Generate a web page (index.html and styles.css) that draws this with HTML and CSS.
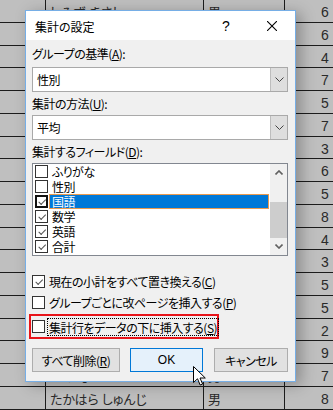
FILE: index.html
```html
<!DOCTYPE html>
<html lang="ja">
<head>
  <meta charset="UTF-8" />
  <title>集計の設定</title>
  <link rel="stylesheet" href="styles.css">
</head>
<body>
  <div class="sheet">
    <div class="cell"></div><div class="cell name">しみず まさし</div><div class="cell">男</div><div class="cell num">6</div>
    <div class="cell"></div><div class="cell name"></div><div class="cell"></div><div class="cell num">6</div>
    <div class="cell"></div><div class="cell name"></div><div class="cell"></div><div class="cell num">4</div>
    <div class="cell"></div><div class="cell name"></div><div class="cell"></div><div class="cell num">7</div>
    <div class="cell"></div><div class="cell name"></div><div class="cell"></div><div class="cell num">5</div>
    <div class="cell"></div><div class="cell name"></div><div class="cell"></div><div class="cell num">7</div>
    <div class="cell"></div><div class="cell name"></div><div class="cell"></div><div class="cell num">3</div>
    <div class="cell"></div><div class="cell name"></div><div class="cell"></div><div class="cell num">6</div>
    <div class="cell"></div><div class="cell name"></div><div class="cell"></div><div class="cell num">5</div>
    <div class="cell"></div><div class="cell name"></div><div class="cell"></div><div class="cell num">8</div>
    <div class="cell"></div><div class="cell name"></div><div class="cell"></div><div class="cell num">4</div>
    <div class="cell"></div><div class="cell name"></div><div class="cell"></div><div class="cell num">3</div>
    <div class="cell"></div><div class="cell name"></div><div class="cell"></div><div class="cell num">5</div>
    <div class="cell"></div><div class="cell name"></div><div class="cell"></div><div class="cell num">5</div>
    <div class="cell"></div><div class="cell name"></div><div class="cell"></div><div class="cell num">2</div>
    <div class="cell"></div><div class="cell name"></div><div class="cell"></div><div class="cell num">9</div>
    <div class="cell"></div><div class="cell name">おの なおき</div><div class="cell">男</div><div class="cell num">7</div>
    <div class="cell"></div><div class="cell name">たかはら しゅんじ</div><div class="cell">男</div><div class="cell num">8</div>
  </div>

  <div class="dialog">
    <div class="titlebar">
      <span class="title">集計の設定</span>
      <span class="tb-btn help">?</span>
      <span class="tb-btn close">
        <svg width="10" height="10" viewBox="0 0 10 10"><path d="M0 0L10 10M10 0L0 10" stroke="#000" stroke-width="1.1" fill="none"/></svg>
      </span>
    </div>

    <div class="dlg-body">
      <div class="label">グループの基準(<u>A</u>):</div>
      <div class="combo">
        <span class="combo-text">性別</span>
        <span class="combo-btn"><svg width="9" height="5" viewBox="0 0 9 5"><path d="M0.5 0.5L4.5 4.5L8.5 0.5" stroke="#444" fill="none"/></svg></span>
      </div>

      <div class="label">集計の方法(<u>U</u>):</div>
      <div class="combo">
        <span class="combo-text">平均</span>
        <span class="combo-btn"><svg width="9" height="5" viewBox="0 0 9 5"><path d="M0.5 0.5L4.5 4.5L8.5 0.5" stroke="#444" fill="none"/></svg></span>
      </div>

      <div class="label">集計するフィールド(<u>D</u>):</div>
      <div class="listbox">
        <div class="items">
          <div class="item"><span class="cb"></span><span class="item-text">ふりがな</span></div>
          <div class="item"><span class="cb"></span><span class="item-text">性別</span></div>
          <div class="item"><span class="cb checked focus"></span><span class="item-text selected">国語</span></div>
          <div class="item"><span class="cb checked"></span><span class="item-text">数学</span></div>
          <div class="item"><span class="cb checked"></span><span class="item-text">英語</span></div>
          <div class="item"><span class="cb checked"></span><span class="item-text">合計</span></div>
        </div>
        <div class="scrollbar">
          <span class="sb-arrow"><svg width="8" height="5" viewBox="0 0 8 5"><path d="M0.5 4.5L4 1L7.5 4.5" stroke="#606060" stroke-width="1.6" fill="none"/></svg></span>
          <span class="sb-track"><span class="sb-thumb"></span></span>
          <span class="sb-arrow"><svg width="8" height="5" viewBox="0 0 8 5"><path d="M0.5 0.5L4 4L7.5 0.5" stroke="#606060" stroke-width="1.6" fill="none"/></svg></span>
        </div>
      </div>

      <div class="option first"><span class="cb checked"></span><span>現在の小計をすべて置き換える(<u>C</u>)</span></div>
      <div class="option"><span class="cb"></span><span>グループごとに改ページを挿入する(<u>P</u>)</span></div>
      <div class="option marked"><span class="cb"></span><span class="focus-text">集計行をデータの下に挿入する(<u>S</u>)</span></div>

      <div class="buttons">
        <span class="btn remove">すべて削除(<u>R</u>)</span>
        <span class="btn ok">OK</span>
        <span class="btn cancel">キャンセル</span>
      </div>
    </div>
  </div>

  <svg class="pointer" width="14" height="21" viewBox="0 0 14 21">
    <path d="M0.5 0.5L0.5 16.5L4.5 12.8L7.2 19L9.6 18L7 12L12.3 12Z" fill="#fff" stroke="#000" stroke-width="1"/>
  </svg>
</body>
</html>
```

FILE: styles.css
```css
body {
  margin: 0;
  width: 333px;
  height: 410px;
  overflow: hidden;
  background-color: #bfbfbf;
  font-family: "Noto Sans CJK JP", sans-serif;
  font-feature-settings: "palt";
  color: #000;
  position: relative;
}

/* background spreadsheet */
.sheet {
  display: grid;
  grid-template-columns: 46px 158px 81px 1fr;
  grid-auto-rows: 22.75px;
}
.cell {
  box-sizing: border-box;
  border-right: 1px solid #1c1c1c;
  border-bottom: 1px solid #1c1c1c;
  font-size: 13px;
  line-height: 24px;
  color: #2a2a2a;
  padding-left: 4px;
  white-space: nowrap;
  overflow: hidden;
}
.cell.num {
  border-right: none;
  padding-left: 36px;
  font-family: "Liberation Sans", sans-serif;
  font-size: 14px;
}

/* dialog */
.dialog {
  position: absolute;
  left: 25px;
  top: 10px;
  width: 271px;
  height: 372px;
  box-sizing: border-box;
  border: 1px solid #76aee6;
  background: #f0f0f0;
  box-shadow: 5px 3px 14px rgba(0,0,0,0.28);
  display: flex;
  flex-direction: column;
}
.titlebar {
  height: 29px;
  background: #fff;
  display: flex;
  align-items: center;
}
.title {
  flex: 1;
  padding-left: 9px;
  font-size: 12px;
  padding-top: 1px;
}
.tb-btn {
  width: 46px;
  height: 29px;
  display: flex;
  align-items: center;
  justify-content: center;
}
.help {
  font-family: "Liberation Sans", sans-serif;
  font-size: 14px;
}
.close svg {
  margin-left: -1px;
}

.dlg-body {
  padding: 4px 7px 0 6px;
  font-size: 12px;
  letter-spacing: -0.5px;
  white-space: nowrap;
}
.label {
  line-height: 20px;
  margin-bottom: 3px;
}
.label + .combo + .label {
  margin-top: 2px;
  margin-bottom: 1px;
}
.combo {
  height: 25px;
  box-sizing: border-box;
  border: 1px solid #a9a9a9;
  background: #fff;
  display: flex;
}
.combo-text {
  flex: 1;
  padding-left: 4px;
  line-height: 23px;
}
.combo-btn {
  width: 16px;
  background: #dedede;
  border-left: 1px solid #bdbdbd;
  display: flex;
  align-items: center;
  justify-content: center;
}

.listbox {
  height: 93px;
  box-sizing: border-box;
  border: 1px solid #828790;
  background: #fff;
  display: flex;
  padding-left: 2px;
}
.items {
  flex: 1;
}
.item {
  height: 15px;
  display: flex;
  align-items: center;
}
.item-text {
  line-height: 13px;
  padding: 0 2px;
  margin-left: 1px;
  border: 1px solid transparent;
  flex: 0 0 auto;
}
.item-text.selected {
  flex: 1;
  margin-right: 1px;
  background: #0078d7;
  color: #fff;
  border-color: #e99a4e;
}
.cb {
  width: 13px;
  height: 13px;
  box-sizing: border-box;
  border: 1px solid #333;
  background: #fff;
  flex: 0 0 auto;
  position: relative;
}
.cb.checked::after {
  content: "";
  position: absolute;
  left: 2px;
  top: 1px;
  width: 6px;
  height: 3px;
  border-left: 1.2px solid #555;
  border-bottom: 1.2px solid #555;
  transform: rotate(-45deg) translate(-1px, 2px);
}
.cb.focus {
  border: 2px solid #111;
}
.cb.focus::after {
  left: 1px;
  top: 0;
}

.scrollbar {
  width: 17px;
  background: #f0f0f0;
  display: flex;
  flex-direction: column;
}
.sb-arrow {
  height: 17px;
  display: flex;
  align-items: center;
  justify-content: center;
}
.sb-track {
  flex: 1;
  display: flex;
  flex-direction: column;
  justify-content: flex-end;
}
.sb-thumb {
  height: 36px;
  background: #cdcdcd;
}

.option {
  display: flex;
  align-items: center;
  height: 20px;
  gap: 4px;
  margin-top: 1px;
}
.option.first {
  margin-top: 15px;
}
.option.marked {
  margin-top: 2px;
  margin-left: -3px;
  height: 25px;
  width: 190px;
  box-sizing: border-box;
  border: 2px solid #e8141a;
  padding-left: 1px;
  gap: 3px;
}
.focus-text {
  outline: 1px dotted #000;
  padding: 1px 1px 0 1px;
  line-height: 15px;
}

.buttons {
  display: flex;
  margin-top: 9px;
}
.btn {
  height: 24px;
  box-sizing: border-box;
  border: 1px solid #adadad;
  background: #e1e1e1;
  display: flex;
  align-items: center;
  justify-content: center;
}
.remove {
  width: 88px;
}
.ok {
  width: 73px;
  margin-left: 10px;
  background: #e5f1fb;
  border-color: #0078d7;
  font-family: "Liberation Sans", sans-serif;
  font-size: 12px;
  letter-spacing: 0;
}
.cancel {
  width: 74px;
  margin-left: 11px;
}

.pointer {
  position: absolute;
  left: 193px;
  top: 366px;
}
```
